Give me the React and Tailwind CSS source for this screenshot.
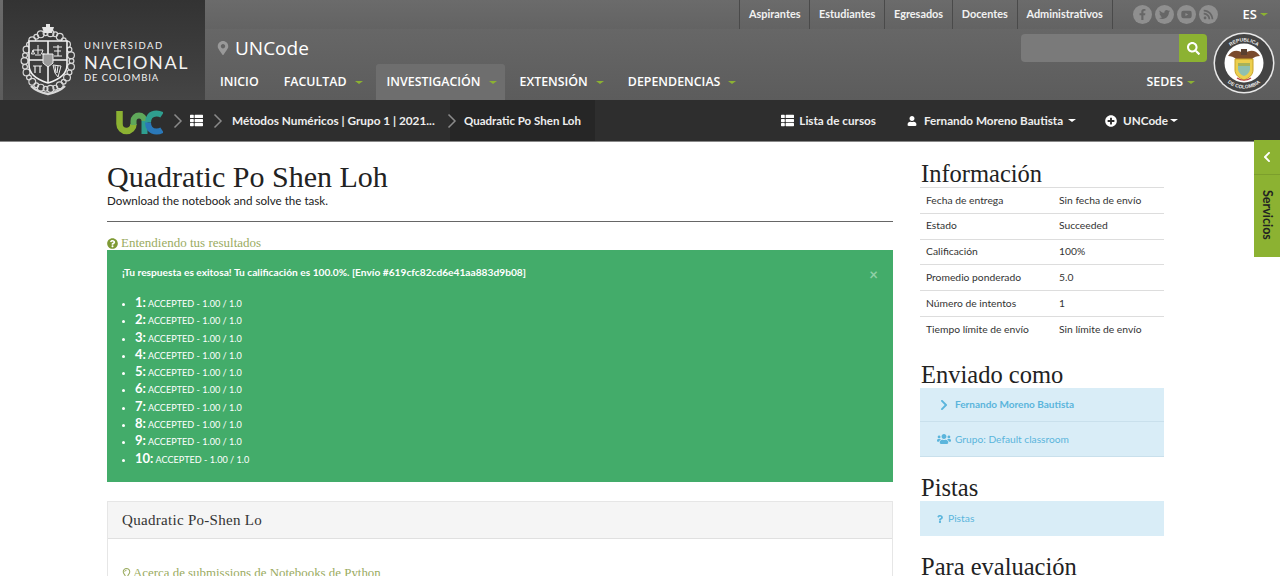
import {
  FaThList,
  FaUser,
  FaPlusCircle,
  FaChevronRight,
  FaChevronLeft,
  FaUsers,
  FaQuestion,
  FaQuestionCircle,
  FaSearch,
  FaMapMarkerAlt,
  FaRegLightbulb,
  FaFacebookF,
  FaTwitter,
  FaYoutube,
  FaRss,
} from 'react-icons/fa'

const topLinks = ['Aspirantes', 'Estudiantes', 'Egresados', 'Docentes', 'Administrativos']
const socials = [FaFacebookF, FaTwitter, FaYoutube, FaRss]

const navItems = [
  { label: 'INICIO', className: 'ml-[4px] pl-[11px] pr-[12px]' },
  { label: 'FACULTAD', caret: true, className: 'pl-[13px] pr-[11px]' },
  { label: 'INVESTIGACIÓN', caret: true, className: 'ml-[2px] pl-[11px] pr-[8px] bg-[#6e6e6e] rounded-t-[3px]' },
  { label: 'EXTENSIÓN', caret: true, className: 'pl-[15px] pr-[11px]' },
  { label: 'DEPENDENCIAS', caret: true, className: 'ml-[2px] pl-[11px] pr-[11px]' },
]

const infoRows = [
  ['Fecha de entrega', 'Sin fecha de envío'],
  ['Estado', 'Succeeded'],
  ['Calificación', '100%'],
  ['Promedio ponderado', '5.0'],
  ['Número de intentos', '1'],
  ['Tiempo límite de envío', 'Sin límite de envío'],
]

const results = [1, 2, 3, 4, 5, 6, 7, 8, 9, 10]

function Caret({ color = 'border-t-[#8cb232]' }) {
  return <span className={`inline-block h-0 w-0 border-x-[4px] border-t-[3px] border-x-transparent ${color}`} />
}

function Crumb() {
  return (
    <svg width="10" height="16" viewBox="0 0 10 16" fill="none" stroke="#8a8a8a" strokeWidth="1.5" className="shrink-0">
      <path d="M1.5 1.5 8 8l-6.5 6.5" />
    </svg>
  )
}

function Crest() {
  const leaves = []
  for (let i = 0; i < 30; i++) {
    const a = (i / 30) * Math.PI * 2
    leaves.push(
      <circle
        key={i}
        cx={28 + Math.cos(a) * 23.5}
        cy={37 + Math.sin(a) * 28}
        r={i % 2 ? 3.4 : 2.4}
        fill="none"
        stroke="#d8d8d8"
        strokeWidth="1.2"
      />,
    )
  }
  return (
    <svg width="56" height="72" viewBox="0 0 56 72" className="shrink-0">
      {leaves}
      <path d="M22 3h12l-2 6h-8zM26 0h4v4h-4z" fill="#e5e5e5" />
      <path d="M9 17h38v24c0 9-9 15-19 18-10-3-19-9-19-18z" fill="#3d3d3d" stroke="#f0f0f0" strokeWidth="1.6" />
      <path d="M28 17v42M9 36h38" stroke="#f0f0f0" strokeWidth="1.6" />
      <path d="M23 30h10v9l-5 4-5-4z" fill="#9a9a9a" stroke="#eee" />
      <path d="M13 26h10M18 21v9M13 26l-1.500 4h3zM23 26l-1.500 4h3M15 31h6" stroke="#eee" strokeWidth="1" fill="none" />
      <path d="M33 23h9M38 21v11M34 27h7M34 32h8" stroke="#eee" strokeWidth="1.100" fill="none" />
      <path d="M13 42h9M15 42v7M20 42v7" stroke="#eee" strokeWidth="1.200" fill="none" />
      <path d="M33 41l8 1-3 11-3-4zM35 42l1 7M38 42l-1 7" stroke="#eee" strokeWidth="1" fill="none" />
      <path d="M11 62c5 5 12 7 17 8 5-1 12-3 17-8" stroke="#d8d8d8" strokeWidth="2.400" fill="none" />
    </svg>
  )
}

function Seal() {
  return (
    <svg width="62" height="62" viewBox="0 0 62 62" className="shrink-0">
      <circle cx="31" cy="31" r="30.500" fill="#e8e8e8" />
      <circle cx="31" cy="31" r="29" fill="#444" />
      <circle cx="31" cy="31" r="19.500" fill="#fff" />
      <defs>
        <path id="sealTop" d="M9.500 31a21.500 21.500 0 0 1 43 0" />
        <path id="sealBottom" d="M5.500 31a25.500 25.500 0 0 0 51 0" />
      </defs>
      <text fill="#eee" fontSize="5" fontWeight="700" fontFamily="'Liberation Sans', sans-serif" textAnchor="middle">
        <textPath href="#sealTop" startOffset="50%">REPUBLICA</textPath>
      </text>
      <text fill="#eee" fontSize="5" fontWeight="700" fontFamily="'Liberation Sans', sans-serif" textAnchor="middle">
        <textPath href="#sealBottom" startOffset="50%">DE COLOMBIA</textPath>
      </text>
      <path d="M15 24c4-6 10-7 16-2 6-5 12-4 16 2-3 0-6 1-8 3H23c-2-2-5-3-8-3z" fill="#7a4a2c" />
      <path d="M28 17h6v6h-6z" fill="#5a4030" />
      <path d="M22 27h18v11c0 5-4 8-9 10-5-2-9-5-9-10z" fill="#eccf4e" stroke="#c9a227" />
      <path d="M25 31h12v6c0 3-3 6-6 7-3-1-6-4-6-7z" fill="#8fc0b0" />
      <path d="M25 31h12v3H25z" fill="#a7b25a" />
      <path d="M24 46c4 3 10 3 14 0" stroke="#b44" strokeWidth="1.200" fill="none" />
    </svg>
  )
}

function UncLogo() {
  return (
    <svg width="48" height="25" viewBox="0 0 48 25" fill="none" className="mt-[3px] shrink-0">
      <path d="M4.500 1V14a7 7 0 0 0 14 0" stroke="#8cb232" strokeWidth="6.500" />
      <path d="M18.500 15V11a5.500 5.500 0 0 1 11 0" stroke="#5fa85a" strokeWidth="6" />
      <path d="M29.500 11V24" stroke="#2f9e8f" strokeWidth="6" />
      <path d="M47 5c-1.500-1-3.500-1.500-5.500-1.500-6 0-8.500 4-8.500 9" stroke="#2f9e8f" strokeWidth="6" />
      <path d="M33 12.500c0 5 2.500 9 8.500 9 2 0 4-.5 5.500-1.500" stroke="#2a78b8" strokeWidth="6" />
    </svg>
  )
}

function SideTitle({ children, className = '' }) {
  return <h3 className={`-mb-[2px] pl-px font-['Liberation_Serif',serif] text-[24.5px] leading-[30px] text-[#222] ${className}`}>{children}</h3>
}

export default function App() {
  return (
    <div className="relative h-[576px] w-[1280px] overflow-hidden bg-white font-['Lato',sans-serif]">
      <header className="flex h-[100px] bg-gradient-to-b from-[#6b6b6b] to-[#5c5c5c] font-['Open_Sans',sans-serif] text-white">
        <div className="ml-[3px] flex w-[202px] shrink-0 items-center gap-[8px] bg-gradient-to-b from-[#333] to-[#454545] pl-[17px] pt-[20px]">
          <Crest />
          <div className="mt-[3px] font-['Lato',sans-serif] text-[#f2f2f2]">
            <p className="text-[9.5px] leading-[13px] tracking-[1.5px]">UNIVERSIDAD</p>
            <p className="text-[18px] leading-[20px] tracking-[1.6px]">NACIONAL</p>
            <p className="text-[9.5px] leading-[12px] tracking-[0.9px]">DE COLOMBIA</p>
          </div>
        </div>

        <div className="flex min-w-0 flex-1 flex-col">
          <div className="flex h-[29px] items-center justify-end bg-gradient-to-b from-[#6b6b6b] to-[#636363] pr-[16px]">
            <ul className="flex h-full font-['Lato',sans-serif]">
              {topLinks.map((link) => (
                <li
                  key={link}
                  className="flex h-full items-center border-l border-[#4a4a4a] px-[8.8px] text-[10.9px] font-bold text-[#f2f2f2] last:border-r"
                >
                  {link}
                </li>
              ))}
            </ul>
            <div className="ml-[20px] flex gap-[3px]">
              {socials.map((Icon, i) => (
                <span key={i} className="flex h-[19px] w-[19px] items-center justify-center rounded-full bg-[#8f8f8f] text-[#666]">
                  <Icon size={11} />
                </span>
              ))}
            </div>
            <span className="ml-[25px] text-[13px] font-semibold">ES</span>
            <span className="ml-[3px] mr-[-4px] flex">
              <Caret />
            </span>
          </div>

          <div className="flex min-h-0 flex-1">
            <div className="flex min-w-0 flex-1 flex-col">
              <div className="flex h-[33px] items-center">
                <div className="flex flex-1 items-center pl-[11px] pt-[5px]">
                  <FaMapMarkerAlt size={14} className="text-[#999]" />
                  <span className="ml-[5px] text-[19px] font-medium leading-none">UNCode</span>
                </div>
                <div className="flex h-[28px] items-stretch self-end">
                  <div className="w-[158px] rounded-l-[4px] bg-[#7a7a7a]" />
                  <button className="flex w-[28px] items-center justify-center rounded-r-[4px] bg-[#8cb232] text-white">
                    <FaSearch size={13} />
                  </button>
                </div>
              </div>
              <nav className="flex h-[38px] items-stretch pt-[2px]">
                {navItems.map((item) => (
                  <span key={item.label} className={`flex items-center gap-[8px] text-[12.4px] font-semibold ${item.className}`}>
                    {item.label}
                    {item.caret && <Caret />}
                  </span>
                ))}
                <span className="ml-auto mr-[12px] flex items-center gap-[4px] text-[12.4px] font-semibold">
                  SEDES
                  <Caret />
                </span>
              </nav>
            </div>
            <div className="flex w-[73px] shrink-0 items-start justify-center pt-[3px]">
              <Seal />
            </div>
          </div>
        </div>
      </header>

      <div className="flex h-[42px] items-stretch border-b border-[#888] bg-[#2e2e2e] pl-[115px] pr-[102px] text-[11.7px] font-bold text-[#eee]">
        <div className="relative z-10 flex items-center">
          <UncLogo />
          <span className="ml-[10px]"><Crumb /></span>
          <FaThList size={13} className="ml-[7px] text-white" />
          <span className="ml-[10px]"><Crumb /></span>
          <span className="ml-[9px] w-[205px] whitespace-nowrap text-[11.8px]">Métodos Numéricos | Grupo 1 | 2021...</span>
          <span className="ml-[10px]"><Crumb /></span>
        </div>
        <div className="ml-[-7px] flex w-[145px] items-center whitespace-nowrap bg-[#262626] pl-[14px] text-[11.5px]">Quadratic Po Shen Loh</div>
        <div className="ml-auto flex items-center">
          <FaThList size={13} className="text-white" />
          <span className="ml-[5px]">Lista de cursos</span>
          <FaUser size={10} className="ml-[31px] text-white" />
          <span className="ml-[7px]">Fernando Moreno Bautista</span>
          <span className="ml-[5px] flex"><Caret color="border-t-white" /></span>
          <FaPlusCircle size={12} className="ml-[29px] text-white" />
          <span className="ml-[6px]">UNCode</span>
          <span className="ml-[2px] flex"><Caret color="border-t-white" /></span>
        </div>
      </div>

      <main className="flex pl-[107px] pt-[20px]">
        <section className="w-[786px] shrink-0">
          <h1 className="font-['Liberation_Serif',serif] text-[30px] leading-[30px] text-[#222]">Quadratic Po Shen Loh</h1>
          <p className="mt-[2px] text-[11.6px] leading-[14px] text-[#222]">Download the notebook and solve the task.</p>
          <hr className="mt-[13px] border-t border-[#666]" />
          <p className="mt-[14px] flex h-[14px] items-center gap-[3px] font-['Liberation_Serif',serif] text-[13px] text-[#9aab5f]">
            <FaQuestionCircle size={11} className="text-[#7f9a35]" />
            Entendiendo tus resultados
          </p>
          <div className="relative h-[232px] bg-[#43ac6a] pl-[15px] pt-[15px] text-white">
            <p className="text-[10.2px] font-bold leading-[14px]">¡Tu respuesta es exitosa! Tu calificación es 100.0%. [Envío #619cfc82cd6e41aa883d9b08]</p>
            <span className="absolute right-[15px] top-[15px] text-[15px] font-bold leading-[18px] text-[#8fd0a6]">×</span>
            <ul className="mt-[15px] list-disc pl-[13px]">
              {results.map((n) => (
                <li key={n} className="h-[17.3px] text-[9.1px] leading-[17.3px] marker:text-[10px] marker:text-white">
                  <b className="text-[13px]">{n}:</b> ACCEPTED - 1.00 / 1.0
                </li>
              ))}
            </ul>
          </div>
          <div className="mt-[19px] border border-[#e6e6e6]">
            <div className="flex h-[37px] items-center border-b border-[#e0e0e0] bg-[#f5f5f5] pl-[14px] font-['Liberation_Serif',serif] text-[15px] tracking-[0.3px] text-[#333]">
              Quadratic Po-Shen Lo
            </div>
            <p className="mt-[25px] flex items-center gap-px pl-[13px] font-['Liberation_Serif',serif] text-[12.9px] text-[#9aab5f]">
              <FaRegLightbulb size={11} />
              Acerca de submissions de Notebooks de Python
            </p>
          </div>
        </section>

        <aside className="ml-[27px] w-[244px] shrink-0 text-[10.3px] text-[#333]">
          <SideTitle className="-mt-[3px]">Información</SideTitle>
          <table className="w-full border-collapse">
            <tbody>
              {infoRows.map(([label, value]) => (
                <tr key={label} className="h-[25.8px] border-t border-[#ddd]">
                  <td className="w-[139px] pl-[6px]">{label}</td>
                  <td>{value}</td>
                </tr>
              ))}
            </tbody>
          </table>
          <SideTitle className="mt-[18px]">Enviado como</SideTitle>
          <div className="bg-[#d9edf7] text-[#5bb5dc]">
            <div className="flex h-[34px] items-center border-b border-[#c9e0ec] pl-[18px] font-bold">
              <FaChevronRight size={12} />
              <span className="ml-[5px] text-[10px]">Fernando Moreno Bautista</span>
            </div>
            <div className="flex h-[35px] items-center border-b border-[#c9e0ec] pl-[17px]">
              <FaUsers size={14} />
              <span className="ml-[4px] text-[10.200px]">Grupo: Default classroom</span>
            </div>
          </div>
          <SideTitle className="mt-[16px]">Pistas</SideTitle>
          <div className="flex h-[35px] items-center bg-[#d9edf7] pl-[16px] text-[#5bb5dc]">
            <FaQuestion size={8} />
            <span className="ml-[4px]">Pistas</span>
          </div>
          <SideTitle className="mt-[16px]">Para evaluación</SideTitle>
        </aside>
      </main>

      <div className="absolute right-0 top-[140px] flex h-[117px] w-[26px] flex-col items-center bg-[#8cb232] text-[#222]">
        <div className="flex h-[35px] w-full items-center justify-center border-b border-[#7c9e2c] text-white">
          <FaChevronLeft size={12} />
        </div>
        <span className="mt-[15px] text-[12.5px] font-bold [writing-mode:vertical-rl]">Servicios</span>
      </div>
    </div>
  )
}
